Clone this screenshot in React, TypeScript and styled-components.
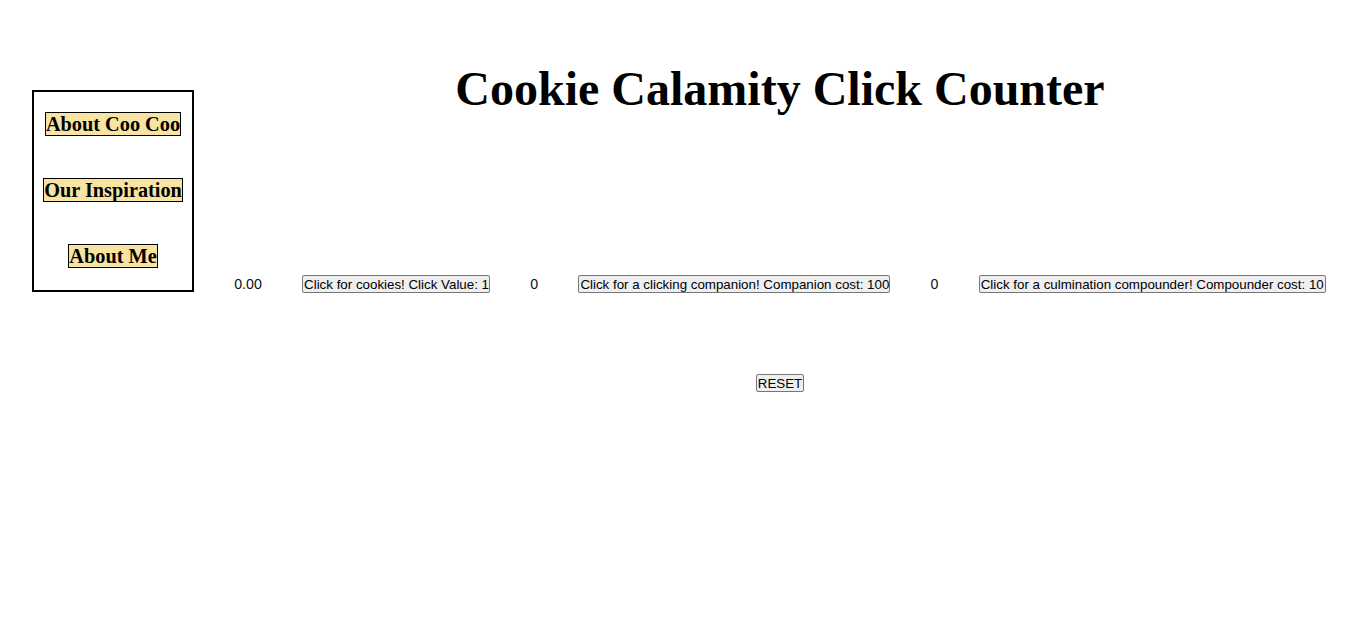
import React from "react";
import styled, { createGlobalStyle } from "styled-components";

const GlobalStyle = createGlobalStyle`
  html, body {
    margin: 0;
    padding: 0;
    background: #ffffff;
    color: #000000;
    font-family: "Liberation Serif", "Times New Roman", serif;
  }
`;

const Page = styled.div`
  display: flex;
  align-items: flex-start;
  min-height: 619px;
`;

const Sidebar = styled.nav`
  box-sizing: border-box;
  width: 162px;
  margin: 90px 0 0 32px;
  border: 2px solid #000;
  padding: 20px 0 22px;
  display: flex;
  flex-direction: column;
  align-items: center;
  gap: 42px;
`;

const NavLink = styled.a`
  display: inline-block;
  background: #f7e4a2;
  border: 1px solid #000;
  font-family: "Liberation Serif", "Times New Roman", serif;
  font-weight: bold;
  font-size: 20.3px;
  line-height: 22px;
  color: #000;
  text-decoration: none;
  white-space: nowrap;
  cursor: pointer;
`;

const Main = styled.main`
  flex: 1;
  display: flex;
  flex-direction: column;
  align-items: center;
`;

const Title = styled.h1`
  margin: 61px 0 0;
  font-family: "Liberation Serif", "Times New Roman", serif;
  font-weight: bold;
  font-size: 48px;
  line-height: 55px;
  text-align: center;
`;

const CounterRow = styled.div`
  align-self: stretch;
  margin-top: 159px;
  height: 18px;
  display: flex;
  align-items: center;
  justify-content: space-evenly;
`;

const Count = styled.span`
  font-family: "Liberation Sans", Arial, sans-serif;
  font-size: 14.2px;
  line-height: 18px;
  color: #111;
`;

const GameButton = styled.button<{ $width?: number }>`
  box-sizing: border-box;
  width: ${(p) => (p.$width ? `${p.$width}px` : "auto")};
  height: 18px;
  padding: 0 1px;
  margin: 0;
  background: #efefef;
  border: 1px solid #767676;
  border-radius: 2px;
  font-family: "Liberation Sans", Arial, sans-serif;
  font-size: 13.333px;
  line-height: 15px;
  color: #000;
  white-space: nowrap;
  overflow: hidden;
  text-align: left;
  flex-shrink: 0;
  cursor: pointer;
`;

const ResetButton = styled(GameButton)`
  margin-top: 81px;
  text-align: center;
`;

export default function App() {
  return (
    <>
      <GlobalStyle />
      <Page>
        <Sidebar>
          <NavLink>About Coo Coo</NavLink>
          <NavLink>Our Inspiration</NavLink>
          <NavLink>About Me</NavLink>
        </Sidebar>
        <Main>
          <Title>Cookie Calamity Click Counter</Title>
          <CounterRow>
            <Count>0.00</Count>
            <GameButton $width={188}>Click for cookies! Click Value: 1</GameButton>
            <Count>0</Count>
            <GameButton $width={312}>Click for a clicking companion! Companion cost: 100</GameButton>
            <Count>0</Count>
            <GameButton $width={347}>Click for a culmination compounder! Compounder cost: 10</GameButton>
          </CounterRow>
          <ResetButton>RESET</ResetButton>
        </Main>
      </Page>
    </>
  );
}
